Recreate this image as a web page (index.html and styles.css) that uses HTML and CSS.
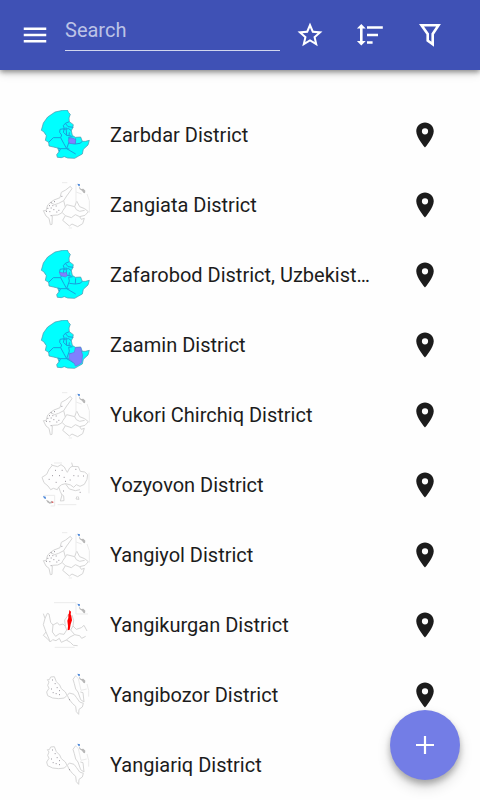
FILE: index.html
```html
<!DOCTYPE html>
<html lang="en">
<head>
  <meta charset="UTF-8" />
  <meta name="viewport" content="width=device-width, initial-scale=1.0" />
  <title>Districts of Uzbekistan</title>
  <link rel="stylesheet" href="styles.css">
</head>
<body>
  <!-- shared icons and map thumbnails -->
  <svg class="sprites" aria-hidden="true">
    <symbol id="place" viewBox="0 0 24 24">
      <path d="M12 2C8.13 2 5 5.13 5 9c0 5.25 7 13 7 13s7-7.75 7-13c0-3.87-3.13-7-7-7zm0 9.5a2.5 2.5 0 0 1 0-5 2.5 2.5 0 0 1 0 5z" />
    </symbol>

    <symbol id="jizzakh" viewBox="30 30 150 150">
      <path class="land" d="M34 91L40 69 53 51 75 36 98 31 112 30 116 38 121 43 117 54 118 65 130 74 128 84 124 92 127 106 136 112 152 111 157 124 166 124 178 121 174 135 160 148 157 162 146 168 134 175 113 174 103 170 94 173 82 172 80 164 87 155 83 144 70 141 57 138 56 127 46 121 49 107 41 95Z" />
      <path class="border" d="M118 65L106 70 100 77 103 86 90 88 89 97 95 105 92 113 70 113 56 127M103 86L100 97 110 106 124 108M106 70L114 80 130 82M100 88L116 86 124 92M108 82L110 106M92 113L101 130 110 146 118 123 116 112 128 110M83 144L92 146 110 146 137 162M118 130L136 132M157 124L150 130 136 132 137 115M87 155L92 146M110 146L118 147M118 97L117 108" />
    </symbol>

    <symbol id="tashkent" viewBox="30 30 150 150">
      <path class="faint" d="M40 122L48 138 57 145 61 164 66 163 67 136 83 135 95 129 99 121 106 111 101 92 110 78 126 56 121 49 107 60 94 67 90 83 72 90 63 96 53 105 48 122ZM106 111L110 104 134 110 140 93 149 110 164 116 175 125 165 136 149 140 154 148 163 145 158 161 143 170 126 162 118 168 98 151 106 137 97 128M106 137L124 143 136 134 149 140M134 110L139 119 149 124 164 121M62 98L74 104 86 100 101 92" />
      <path class="light" d="M138 42V98M138 66L155 72M171 72L178 92V128M96 38H112M116 174H126" />
      <path class="dots" d="M62 98h3M72 95h3M57 107h3M67 107h3M77 108h3M52 115h3M62 114h3M70 119h3M48 124h3M58 125h3M79 126h3M62 137h3M85 121h3M94 79h3" />
      <use href="#inset" />
    </symbol>

    <symbol id="inset" viewBox="0 0 210 210" width="210" height="210">
      <path class="blue" d="M142 41L150 43 149 49 145 47Z" />
      <path class="grey" d="M146 49L150 53 153 57 160 56 166 62 165 70 160 68 156 62 149 58Z" />
    </symbol>

    <symbol id="fergana" viewBox="30 30 150 150">
      <path class="faint" d="M36 82L50 73 57 58 67 46 83 50 93 44 103 51 107 59 112 67 119 54 126 49 145 50 151 64 164 66 173 74 171 88 163 103 150 109 139 104 131 112 122 105 107 101 95 104 86 111 82 119 70 115 62 119 54 108 42 98ZM86 111L91 125 96 135 91 153 102 152 101 138 96 133M141 139L138 147 147 148 144 139M64 42L68 48M125 38L128 49M106 101L118 117 136 122 150 119" />
      <path class="light" d="M72 39H96M177 68V130M83 164H139" />
      <path class="dots" d="M75 61h3M95 61h3M66 77h3M87 77h3M101 82h3M130 77h3M143 78h3M159 78h3M56 88h3M77 97h3M105 94h3M136 58h3M119 90h3M99 123h3M149 127h3" />
      <path class="light" d="M40 136H74V168H62" />
      <path class="blue" d="M39 138L47 140 48 147 42 145Z" />
      <path class="grey" d="M48 149L52 157 59 161 70 158 65 152 60 157 55 152Z" />
      <path class="red-line" d="M65 156l5 1" />
    </symbol>

    <symbol id="namangan" viewBox="30 30 150 150">
      <path class="faint" d="M40 71L45 85 40 104 48 126 40 136 52 146 61 156 68 149 78 152 88 145 94 157 109 150 120 141 134 134 149 137 155 145 167 139M45 85L52 70 57 72 62 97 69 105 82 98 88 105 99 102 106 109 104 90 112 79 116 72M126 75L131 92 129 108 139 118 154 113 162 106 171 123M106 109L110 120 102 133 88 131 77 139 67 126 69 105M109 150L121 157 130 166 143 167M48 126L61 156M129 108L122 120 134 134" />
      <path class="light" d="M72 38H138V72H174M74 172H134" />
      <path class="red" d="M118 60L123 65 122 73 124 78 126 91 122 103 119 119 113 121 114 108 112 92 115 84 115 74 117 70Z" />
      <use href="#inset" />
    </symbol>

    <symbol id="khorezm" viewBox="30 30 150 150">
      <path class="faint" d="M52 59L57 66 53 76 57 85 50 96 53 107 68 114 86 116 103 114 111 106 106 96 94 86 89 75 79 65 73 50 62 51 58 59ZM112 106L118 99 132 103 139 112 149 126 160 130 157 141 147 148 146 163 139 155 137 139 127 130 117 117ZM137 47L129 58 133 71 137 87 144 96 152 119 162 126 159 98 151 96" />
      <path class="light" d="M137 47L145 56 153 91 170 87M171 72L176 91V110" />
      <path class="dots" d="M66 60h3M74 71h3M63 87h3M80 83h3M68 98h3M77 101h3M87 104h3M117 119h3M87 92h3" />
      <use href="#inset" />
    </symbol>
  </svg>

  <header class="toolbar">
    <button class="icon-btn" aria-label="Menu">
      <svg class="icon" viewBox="0 0 24 24"><path d="M3 18h18v-2H3v2zm0-5h18v-2H3v2zm0-7v2h18V6H3z" /></svg>
    </button>
    <input class="search" type="text" placeholder="Search" aria-label="Search" />
    <div class="actions">
      <button class="icon-btn" aria-label="Favorites">
        <svg class="icon" viewBox="0 0 24 24"><path d="M22 9.24l-7.19-.62L12 2 9.19 8.63 2 9.24l5.46 4.73L5.82 21 12 17.27 18.18 21l-1.63-7.03L22 9.24zM12 15.4l-3.76 2.27 1-4.28-3.32-2.88 4.38-.38L12 6.1l1.71 4.04 4.38.38-3.32 2.88 1 4.28L12 15.4z" /></svg>
      </button>
      <button class="icon-btn" aria-label="Sort">
        <svg class="icon" viewBox="0 0 30 30"><path d="M6.300 4l4.400 4.500H7.600v12.500h3.100L6.300 25.500 1.900 21H5V8.500H1.900zM12 6.200h15.800v2.600H12zM12 13.700h11v2.600H12zM12 21.200h5.600v2.600H12z" /></svg>
      </button>
      <button class="icon-btn" aria-label="Filter">
        <svg class="icon line" viewBox="0 0 30 30"><path d="M6.500 5.200h17L17.700 14v10.200L12.700 20.500V14z" /></svg>
      </button>
    </div>
  </header>

  <main>
    <ul class="list">
      <li class="row">
        <svg class="thumb"><use href="#jizzakh" /><svg viewBox="30 30 150 150"><path class="marked" d="M119 114L132 115 137 121 135 131 119 130 115 122Z" /></svg></svg>
        <span class="name">Zarbdar District</span>
        <button class="icon-btn pin" aria-label="Show Zarbdar District on map"><svg class="icon"><use href="#place" /></svg></button>
      </li>
      <li class="row">
        <svg class="thumb"><use href="#tashkent" /></svg>
        <span class="name">Zangiata District</span>
        <button class="icon-btn pin" aria-label="Show Zangiata District on map"><svg class="icon"><use href="#place" /></svg></button>
      </li>
      <li class="row">
        <svg class="thumb"><use href="#jizzakh" /><svg viewBox="30 30 150 150"><path class="marked" d="M88 97L101 99 109 97 112 107 106 111 92 107Z" /></svg></svg>
        <span class="name">Zafarobod District, Uzbekistan</span>
        <button class="icon-btn pin" aria-label="Show Zafarobod District on map"><svg class="icon"><use href="#place" /></svg></button>
      </li>
      <li class="row">
        <svg class="thumb"><use href="#jizzakh" /><svg viewBox="30 30 150 150"><path class="marked" d="M136 113L152 112 155 127 158 134 155 158 146 164 136 168 133 160 117 147 118 132 133 127Z" /></svg></svg>
        <span class="name">Zaamin District</span>
        <button class="icon-btn pin" aria-label="Show Zaamin District on map"><svg class="icon"><use href="#place" /></svg></button>
      </li>
      <li class="row">
        <svg class="thumb"><use href="#tashkent" /></svg>
        <span class="name">Yukori Chirchiq District</span>
        <button class="icon-btn pin" aria-label="Show Yukori Chirchiq District on map"><svg class="icon"><use href="#place" /></svg></button>
      </li>
      <li class="row">
        <svg class="thumb"><use href="#fergana" /></svg>
        <span class="name">Yozyovon District</span>
        <button class="icon-btn pin" aria-label="Show Yozyovon District on map"><svg class="icon"><use href="#place" /></svg></button>
      </li>
      <li class="row">
        <svg class="thumb"><use href="#tashkent" /></svg>
        <span class="name">Yangiyol District</span>
        <button class="icon-btn pin" aria-label="Show Yangiyol District on map"><svg class="icon"><use href="#place" /></svg></button>
      </li>
      <li class="row">
        <svg class="thumb"><use href="#namangan" /></svg>
        <span class="name">Yangikurgan District</span>
        <button class="icon-btn pin" aria-label="Show Yangikurgan District on map"><svg class="icon"><use href="#place" /></svg></button>
      </li>
      <li class="row">
        <svg class="thumb"><use href="#khorezm" /></svg>
        <span class="name">Yangibozor District</span>
        <button class="icon-btn pin" aria-label="Show Yangibozor District on map"><svg class="icon"><use href="#place" /></svg></button>
      </li>
      <li class="row">
        <svg class="thumb"><use href="#khorezm" /></svg>
        <span class="name">Yangiariq District</span>
        <button class="icon-btn pin" aria-label="Show Yangiariq District on map"><svg class="icon"><use href="#place" /></svg></button>
      </li>
    </ul>
  </main>

  <button class="fab" aria-label="Add">
    <svg class="icon" viewBox="0 0 30 30"><path d="M24 16.100h-7.900V24h-2.200v-7.900H6v-2.200h7.900V6h2.200v7.900H24z" /></svg>
  </button>
</body>
</html>
```
FILE: styles.css
```css
* {
  box-sizing: border-box;
}
body {
  margin: 0;
  font-family: Roboto, "Liberation Sans", sans-serif;
  font-size: 20px;
  background-color: #fefefe;
  color: #1c1c1c;
}
.sprites {
  position: absolute;
  width: 0;
  height: 0;
}

/* toolbar */
.toolbar {
  position: sticky;
  top: 0;
  z-index: 1;
  display: flex;
  align-items: center;
  height: 70px;
  padding: 0 35px 0 20px;
  background-color: #3f51b5;
  color: #fff;
  box-shadow: 0 2px 5px rgba(0, 0, 0, 0.4), 0 4px 9px rgba(0, 0, 0, 0.12);
}
.icon-btn {
  flex: none;
  width: 30px;
  height: 30px;
  padding: 0;
  border: none;
  background: none;
  color: inherit;
  cursor: pointer;
}
.icon {
  display: block;
  width: 30px;
  height: 30px;
  fill: currentColor;
}
.icon.line {
  fill: none;
  stroke: currentColor;
  stroke-width: 2.6;
}
.search {
  flex: 1;
  min-width: 0;
  height: 32px;
  margin: 0 15px;
  padding: 0 0 9px;
  border: none;
  border-bottom: 1px solid #d0d5ee;
  background: none;
  color: #fff;
  font: inherit;
  outline: none;
}
.search::placeholder {
  color: #bcc3e6;
}
.actions {
  display: flex;
  gap: 30px;
}

/* list */
.list {
  margin: 0;
  padding: 30px 40px 0;
  list-style: none;
}
.row {
  display: flex;
  align-items: center;
  height: 70px;
}
.thumb {
  flex: none;
  width: 50px;
  height: 50px;
  margin-right: 20px;
}
.name {
  flex: 1;
  min-width: 0;
  margin-right: 40px;
  overflow: hidden;
  text-overflow: ellipsis;
  white-space: nowrap;
}

/* maps */
.land {
  fill: #00ffff;
  stroke: #4f8fa8;
  stroke-width: 2;
}
.border {
  fill: none;
  stroke: #1a9fdc;
  stroke-width: 3;
}
.marked {
  fill: #8080ff;
  stroke: #6a74e0;
  stroke-width: 2;
}
.faint {
  fill: none;
  stroke: #d6d6d6;
  stroke-width: 3;
}
.light {
  fill: none;
  stroke: #ebebeb;
  stroke-width: 3;
}
.dots {
  fill: none;
  stroke: #98949c;
  stroke-width: 3;
}
.blue {
  fill: #4a86d8;
}
.grey {
  fill: #b8b8b8;
}
.red {
  fill: #ff0000;
}
.red-line {
  stroke: #e06060;
  stroke-width: 4;
}

/* add button */
.fab {
  position: fixed;
  right: 20px;
  bottom: 20px;
  z-index: 1;
  display: flex;
  align-items: center;
  justify-content: center;
  width: 70px;
  height: 70px;
  padding: 0;
  border: none;
  border-radius: 50%;
  background-color: #737de6;
  color: #fff;
  box-shadow: 0 4px 6px rgba(0, 0, 0, 0.25), 0 7px 14px rgba(0, 0, 0, 0.16);
  cursor: pointer;
}
```
